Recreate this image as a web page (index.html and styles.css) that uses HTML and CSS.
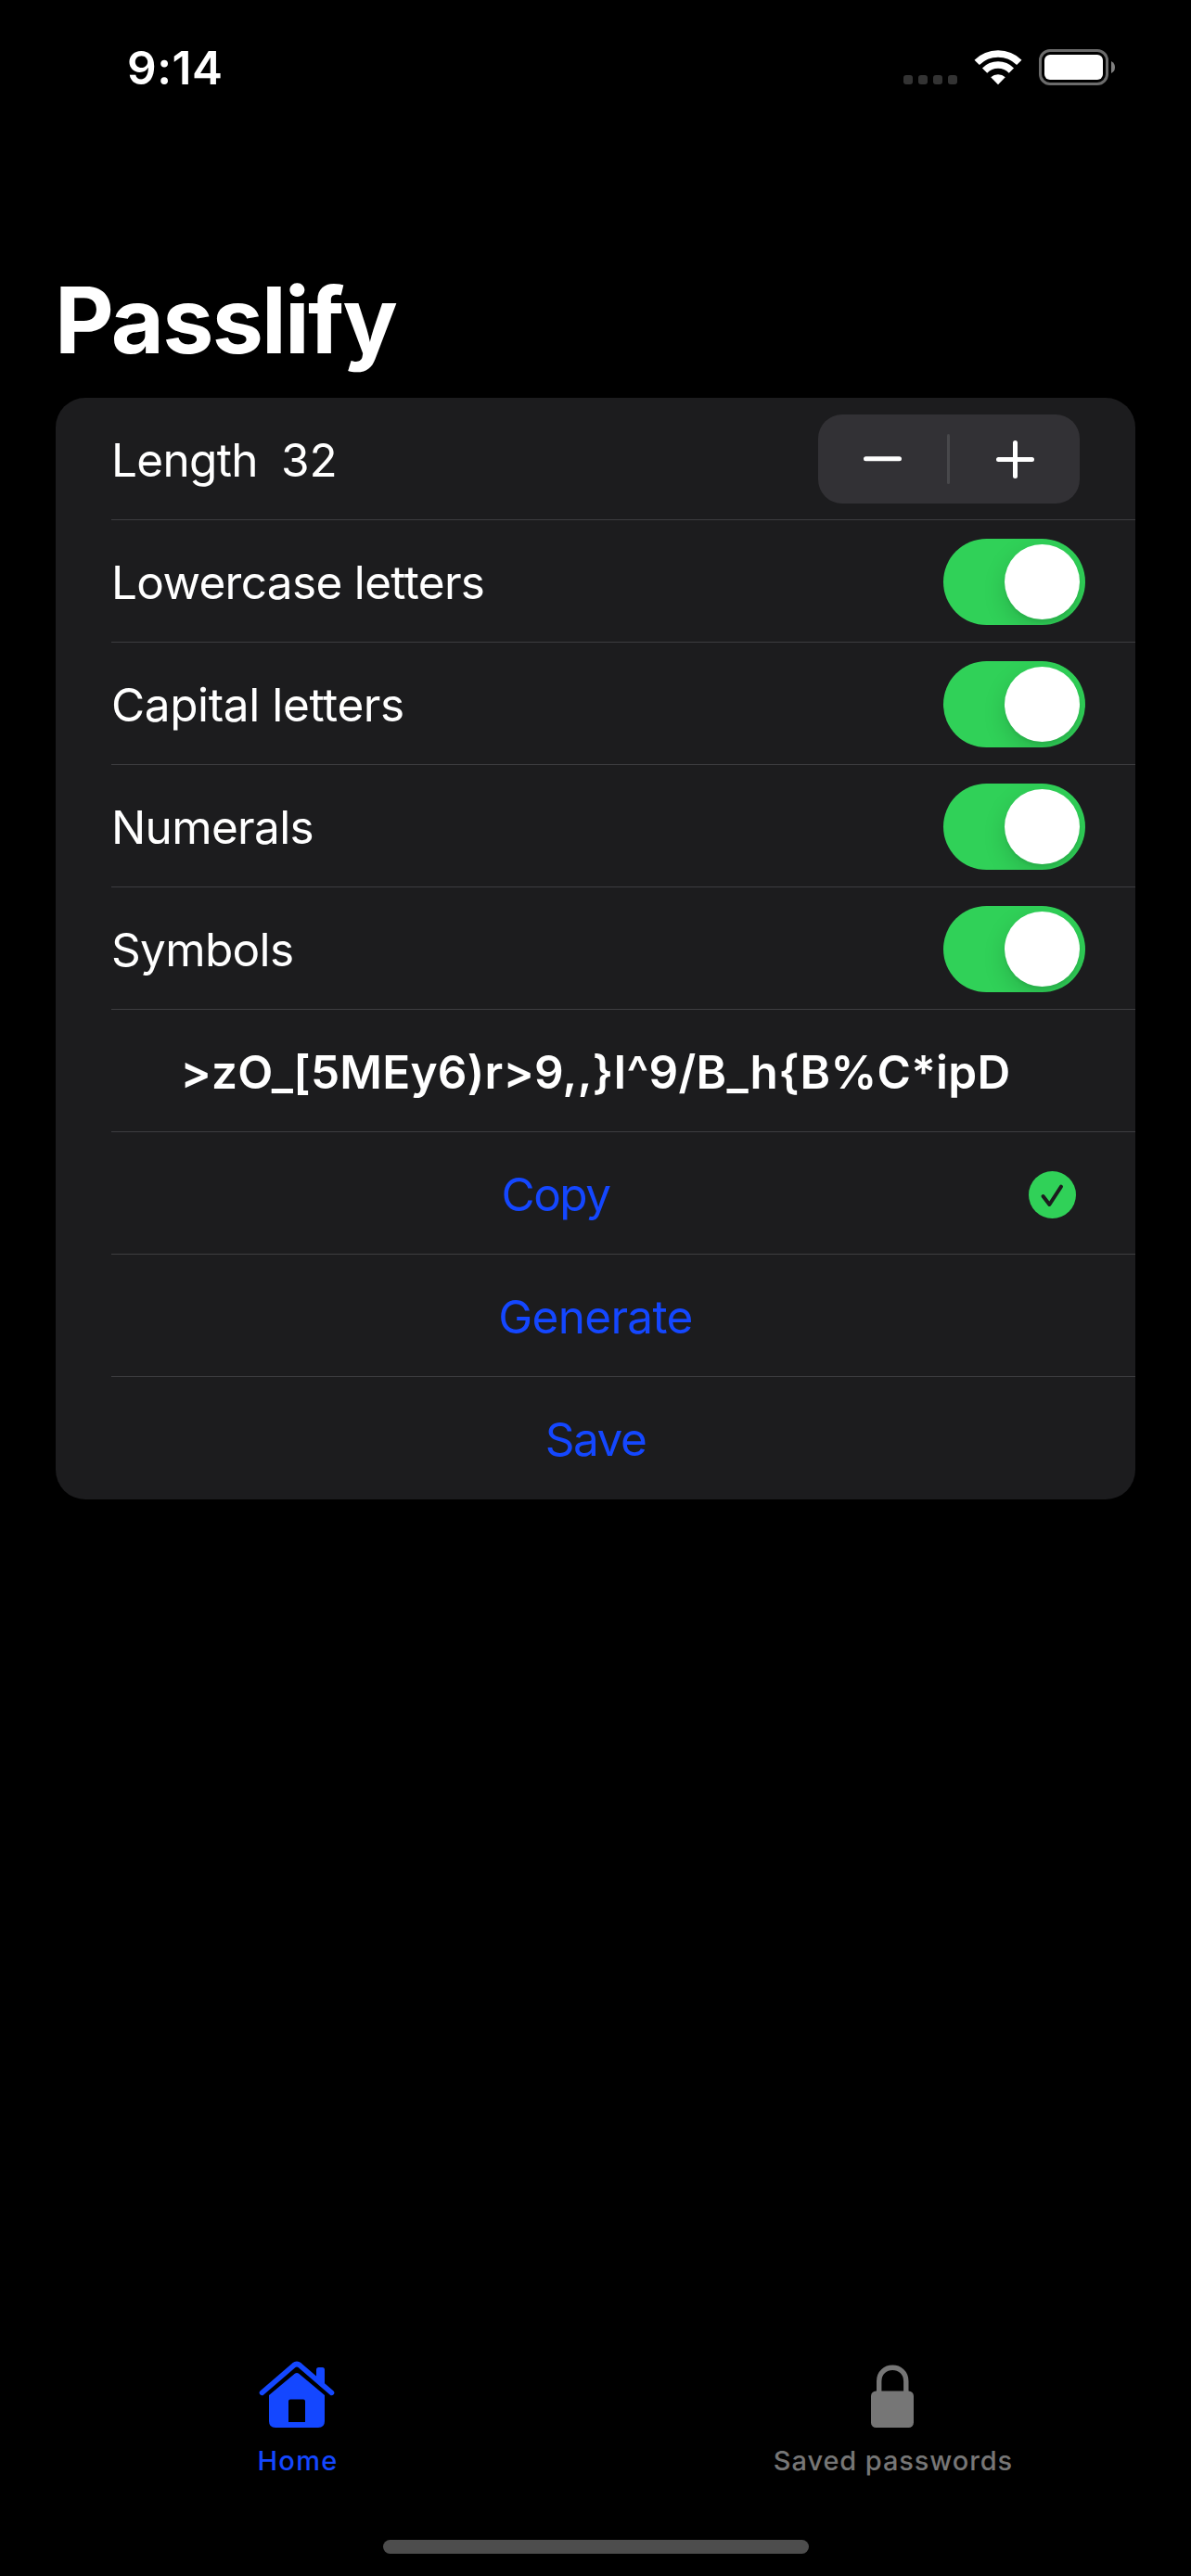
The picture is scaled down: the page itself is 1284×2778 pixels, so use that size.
FILE: index.html
```html
<!DOCTYPE html>
<html lang="en">
<head>
  <meta charset="utf-8">
  <title>Passlify</title>
  <link rel="stylesheet" href="styles.css">
</head>
<body>
  <div class="screen">
    <header class="status-bar">
      <span class="time">9:14</span>
      <div class="status-icons">
        <div class="signal"><i></i><i></i><i></i><i></i></div>
        <svg class="wifi" width="52" height="38" viewBox="0 0 52 38">
          <g fill="none" stroke="#fff">
            <path d="M3.2 13.4 A32.3 32.3 0 0 1 48.8 13.4" stroke-width="7.6"/>
            <path d="M11.6 22.1 A20.2 20.2 0 0 1 40.4 22.1" stroke-width="7.4"/>
          </g>
          <path d="M18.2 29.2 A11.5 11.5 0 0 1 33.8 29.2 L26 37.2Z" fill="#fff"/>
        </svg>
        <svg class="battery" width="84" height="39" viewBox="0 0 84 39">
          <rect x="1.5" y="1.5" width="72" height="36" rx="10.5" fill="none" stroke="#6b6b6b" stroke-width="3"/>
          <rect x="6" y="6" width="63" height="27" rx="6" fill="#fff"/>
          <path d="M78 13 Q82 15 82 19.5 Q82 24 78 26Z" fill="#808080"/>
        </svg>
      </div>
    </header>

    <main class="content">
      <h1 class="title">Passlify</h1>
      <section class="card">
        <div class="row">
          <span class="label length">Length</span><span class="label count">32</span>
          <div class="stepper">
            <svg width="282" height="96" viewBox="0 0 282 96">
              <rect x="139" y="21" width="3" height="54" rx="1.5" fill="#48484b"/>
              <g stroke="#fff" stroke-width="5" stroke-linecap="round">
                <path d="M51.5 47.7H87.5"/>
                <path d="M194.5 48.5H230.5M212.5 30.5V66.5"/>
              </g>
            </svg>
          </div>
        </div>
        <div class="row"><span class="label">Lowercase letters</span><div class="toggle"><i></i></div></div>
        <div class="row"><span class="label capital">Capital letters</span><div class="toggle"><i></i></div></div>
        <div class="row"><span class="label">Numerals</span><div class="toggle"><i></i></div></div>
        <div class="row"><span class="label">Symbols</span><div class="toggle"><i></i></div></div>
        <div class="row centered"><span class="label password">&gt;zO_[5MEy6)r&gt;9,,}I^9/B_h{B%C*ipD</span></div>
        <div class="row with-check">
          <span class="label action tight">Copy</span>
          <svg class="check" width="51" height="51" viewBox="0 0 51 51">
            <circle cx="25.5" cy="25.5" r="25.5" fill="#30d158"/>
            <path d="M15.5 27L22.4 36L35 16.7" fill="none" stroke="#1c1c1e" stroke-width="4" stroke-linecap="round" stroke-linejoin="round"/>
          </svg>
        </div>
        <div class="row centered"><span class="label action generate">Generate</span></div>
        <div class="row centered"><span class="label action tight">Save</span></div>
      </section>
    </main>

    <nav class="tabs">
      <div class="tab active">
        <svg width="84" height="76" viewBox="0 0 84 76">
          <path d="M4.5 36.3L38.7 6.8Q42 4.2 45.3 6.8L79.5 36.3" fill="none" stroke="currentColor" stroke-width="5.6" stroke-linecap="round"/>
          <path d="M63 22V11.5Q63 9 65.5 9H69.5Q72 9 72 11.5V29Z" fill="currentColor"/>
          <path fill="currentColor" fill-rule="evenodd" d="M12 39L39.8 15.8Q42 14 44.2 15.8L72 39V67Q72 74 65 74H19Q12 74 12 67ZM35 43.5Q33 43.5 33 45.5V68H51V45.5Q51 43.5 49 43.5Z"/>
        </svg>
        <span>Home</span>
      </div>
      <div class="tab">
        <svg width="46" height="76" viewBox="0 0 46 76">
          <path d="M8.7 36V24C8.7 4.3 37.8 4.3 37.8 24V36" fill="none" stroke="currentColor" stroke-width="5.4"/>
          <rect x="0" y="34.5" width="46" height="39.5" rx="5.5" fill="currentColor"/>
        </svg>
        <span>Saved passwords</span>
      </div>
    </nav>
    <div class="home-indicator"></div>
  </div>
</body>
</html>
```
FILE: styles.css
```css
* {
  box-sizing: border-box;
}

body {
  margin: 0;
  background: #000;
  color: #fff;
  font-family: Inter, "Liberation Sans", sans-serif;
}

.screen {
  width: 1284px;
  height: 2778px;
  display: flex;
  flex-direction: column;
  overflow: hidden;
}

.status-bar {
  height: 146px;
  padding: 0 80px 0 137px;
  display: flex;
  align-items: center;
  justify-content: space-between;
}

.time {
  font-size: 49.5px;
  font-weight: 600;
  letter-spacing: 0.5px;
}

.status-icons {
  height: 40px;
  display: flex;
  align-items: flex-start;
}

.signal {
  display: flex;
  gap: 6px;
  margin: 28px 19px 0 0;
}

.signal i {
  width: 10px;
  height: 10px;
  border-radius: 3px;
  background: #333;
}

.wifi {
  margin: 1px 18px 0 -1px;
}

.content {
  flex: 1;
  padding: 140px 60px 0;
}

.title {
  height: 119px;
  line-height: 119px;
  margin: 0 0 24px -1px;
  font-size: 98.6px;
  font-weight: 700;
  letter-spacing: -1.8px;
}

.card {
  background: #1c1c1e;
  border-radius: 32px;
  padding-left: 60px;
}

.row {
  height: 132px;
  display: flex;
  align-items: center;
  padding-right: 60px;
  border-bottom: 1px solid #3d3d40;
}

.row:last-child {
  border-bottom-color: transparent;
}

.label {
  padding-top: 3px;
  font-size: 49.5px;
  line-height: 60px;
  letter-spacing: -0.67px;
  white-space: pre;
}

.capital { letter-spacing: -0.38px; }

.length { width: 183px; }
.count { letter-spacing: 0; }

.centered {
  justify-content: center;
}

.password {
  font-weight: 600;
  letter-spacing: 0.27px;
}

.action { color: #1447ff; }
.tight { letter-spacing: -1.5px; }
.generate { letter-spacing: -0.7px; }

.with-check .action {
  flex: 1;
  text-align: center;
  padding-right: 31px;
}

.check {
  margin: 3px 4px 0 0;
}

.stepper {
  width: 282px;
  height: 96px;
  margin-left: auto;
  border-radius: 26px;
  background: #323135;
}

.stepper svg {
  display: block;
}

.toggle {
  width: 153px;
  height: 93px;
  margin: 2px -6px 0 auto;
  padding: 6px;
  border-radius: 47px;
  background: #30d158;
  display: flex;
  justify-content: flex-end;
  overflow: hidden;
}

.toggle i {
  width: 81px;
  height: 81px;
  border-radius: 50%;
  background: #fff;
  box-shadow: 0 9px 24px rgba(0, 0, 0, 0.15), 0 3px 3px rgba(0, 0, 0, 0.06);
}

.tabs {
  height: 195px;
  display: grid;
  grid-template-columns: 1fr 1fr;
}

.tab {
  display: flex;
  flex-direction: column;
  align-items: center;
  color: #767676;
  font-size: 29px;
  line-height: 36px;
  font-weight: 450;
  letter-spacing: 0.9px;
}

.tab svg {
  margin: 0 2px 16px 0;
}

.tab.active {
  color: #1447ff;
  letter-spacing: 1.3px;
}

.home-indicator {
  width: 459px;
  height: 15px;
  margin: 0 auto 24px;
  border-radius: 7.5px;
  background: #4d4d4d;
}
```
